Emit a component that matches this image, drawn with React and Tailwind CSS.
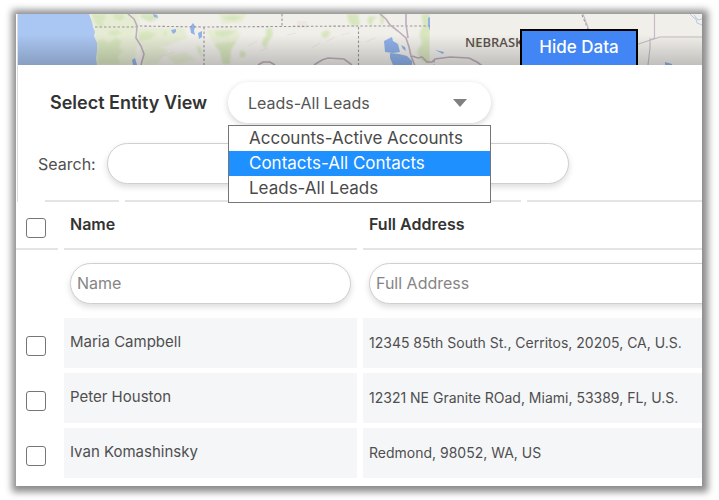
import React, { useState } from 'react';

const VIEWS = ['Accounts-Active Accounts', 'Contacts-All Contacts', 'Leads-All Leads'];

const RECORDS = [
  { id: 1, name: 'Maria Campbell', address: '12345 85th South St., Cerritos, 20205, CA, U.S.' },
  { id: 2, name: 'Peter Houston', address: '12321 NE Granite ROad, Miami, 53389, FL, U.S.' },
  { id: 3, name: 'Ivan Komashinsky', address: 'Redmond, 98052, WA, US' },
];

const PILL = 'h-[41px] rounded-full border border-[#cfcfcf] bg-white shadow-[0_3px_6px_rgba(0,0,0,0.14)] outline-none';
const CHECKBOX = 'block w-5 h-5 appearance-none rounded-[3px] border border-[#767676] bg-white checked:bg-[#1e90ff]';

function MapStrip() {
  return (
    <svg viewBox="18 14 684 51" preserveAspectRatio="xMidYMin slice" className="block w-full h-[51px]" aria-hidden="true">
      <defs>
        <linearGradient id="shade" x1="0" y1="0" x2="0" y2="1">
          <stop offset="0.4" stopColor="#000" stopOpacity="0" />
          <stop offset="1" stopColor="#000" stopOpacity="0.2" />
        </linearGradient>
        <filter id="soft">
          <feGaussianBlur stdDeviation="0.8" />
        </filter>
      </defs>
      <rect x="18" y="14" width="684" height="51" fill="#f1efea" />
      {/* Forests */}
      <g filter="url(#soft)">
        <g fill="#e6ecd4">
          <path d="M90 12h48l2 14-10 10-30-2-8-10zM94 28h38l6 12-4 26H96zM136 28h48l4 10-22 8-26 2zM140 50l16-4 12 4-10 14-14 2zM212 36l30-4-8 14-16 2z" />
          <path d="M205 30l34-1-10 12-16 1zM218 12h30l-6 10-20 2zM166 56l20-4 10 8-20 5z" />
        </g>
        <g fill="#d8e6bf">
          <path d="M92 14h13l1 5-4 3 3 4-6 1-4-5zM113 14h10l2 4-5 3-6-2zM96 42l7-3 5 4 8-5 6 3-3 6 4 4-5 5 2 8H98zM108 31l9-1 5 3-6 3-7-1zM140 14h16l3 4-9 4-9-4zM138 33l8-2 11 3-7 5-11 2zM163 33l3-2 1 4-3 1zM197 45l4 3 2 10-5-7zM214 44l22-3-5 9-1 14h-7l-3-12zM215 31l12-1 9 2-10 5-10-1zM222 17l12-2 8 2-7 4-9-1z" />
          <path d="M266 29l6-1 1 7-5 7-2 6-4-3 1-6 3-3zM321 33l6-3 4 3-5 5-4-1zM347 14h11l2 10-7 3-5-6zM369 16l9 1-5 3-1 6-5-4zM380 14h4v9l-3 2zM240 50l5 2 1 4-6 2z" />
          <path d="M421 14h9v50l-9-3-4-10 5-8-3-9 4-8zM474 42l6-2v7h-6z" />
        </g>
      </g>
      <path d="M430 14h40v20l-2 31h-38z" fill="#f1efea" />
      <path d="M475 41l5-1v7h-5z" fill="#dbe7c6" />
      <path d="M297 21h10v7h-10zM569 30h13v9h-13z" fill="#ece7e0" />
      {/* Water */}
      <path d="M18 14h71l3 8 1 5 2 5-1 4 3 7v8l-1 7 1 7H18z" fill="#aac6f2" />
      <g fill="#8fb2ea">
        <path d="M153 14l4 1 1 3-4-1zM171 30l5-1v3l-3 2zM190 27l3-4 2 3-1 5 1 4-4-2zM198 33l4-2v6l-3 2zM132 60l3-2 2 7h-4z" />
        <path d="M384 41l8-4 1 4 5 3 2 8-7 1-8-1zM390 53l9 1 8 2 5 5v4h-19l-3-7zM401 45l4 2 1 4-3-2zM428 18l2-1v14l-2-6zM435 50l9 2-1 2zM665 62l7 2v1h-7z" />
      </g>
      <path d="M690 14l4 4 2 1 1 4 5 2M694 15l4 5 4-1" fill="none" stroke="#b6c8e2" strokeWidth="1" />
      {/* State borders */}
      <g fill="none" stroke="#9a9498" strokeWidth="1.1" strokeDasharray="2.5 2">
        <path d="M95 27h40l4-1 65 1 154-1h72" />
        <path d="M204 27v38M282 14v12M358.500 27v38M434 60v5M582 15l6 14" />
      </g>
      {/* Highways */}
      <g fill="none" stroke="#bdadbd" strokeWidth="1.600">
        <path d="M128 14l6 5 3 7-1 12 5 8 3 8-3 11" />
        <path d="M380 14l6 5 4 6 8 6 8 7 3 9 2 9 4 10M406 14v10l2 14M412 56l6 2 4-1 5 5 5 0 3-3 15-2 19 1 8 4 8 6" />
        <path d="M258 65l5-3 7 0 5 3M314 65l8-5 6-2 16 1 8 6" />
      </g>
      <g fill="none" stroke="#c6bbc6" strokeWidth="1.200">
        <path d="M583 14l6 16M654.500 14v24l-4 2-15 5M650 38v10l-2 17M651 40l9-3h42" />
      </g>
      <g fill="none" stroke="#e7e4dd" strokeWidth="1">
        <path d="M248 46l9-5M260 51l8-3M287 35l9-2M312 48l8-5M327 41l8-4M341 35l9-2M366 42l9-4M160 57l14-5M178 62l9-6" />
      </g>
      <rect x="18" y="14" width="684" height="51" fill="url(#shade)" />
      <text x="465" y="47" fontSize="13" fill="#5a504e" className="font-['Open_Sans',sans-serif]" fontWeight="600">NEBRASKA</text>
    </svg>
  );
}

function EntitySelect({ value, onChange }) {
  return (
    <div className="relative w-[263px]">
      <select
        id="entity-view"
        value={value}
        onChange={(e) => onChange(e.target.value)}
        className="block w-full h-[41px] appearance-none rounded-full bg-white pl-5 pr-12 text-[16px] text-[#555] shadow-[0_2px_6px_rgba(0,0,0,0.18)] outline-none"
      >
        {VIEWS.map((view) => <option key={view}>{view}</option>)}
      </select>
      <svg viewBox="0 0 14 8" className="absolute right-6 top-[17px] w-[14px] h-2 pointer-events-none" aria-hidden="true">
        <path d="M0 0h14L7 8z" fill="#808080" />
      </svg>
      <ul role="listbox" aria-label="Entity views" className="absolute z-10 left-0 top-[43px] w-full border border-[#767676] bg-white pb-px">
        {VIEWS.map((view) => (
          <li
            key={view}
            role="option"
            aria-selected={view === value}
            onClick={() => onChange(view)}
            className={`h-[25px] pl-5 text-[17px] leading-[24px] cursor-default ${
              view === 'Contacts-All Contacts' ? 'bg-[#1e90ff] text-white' : 'text-[#4a4a4a]'
            }`}
          >
            {view}
          </li>
        ))}
      </ul>
    </div>
  );
}

export default function App() {
  const [view, setView] = useState('Leads-All Leads');
  const [selected, setSelected] = useState([]);

  const toggle = (id) => {
    setSelected((prev) => (prev.includes(id) ? prev.filter((x) => x !== id) : [...prev, id]));
  };

  const toggleAll = () => {
    setSelected(selected.length === RECORDS.length ? [] : RECORDS.map((r) => r.id));
  };

  return (
    <div className="bg-white pt-[14px] pb-[14px] pl-4 pr-[17px] font-[Inter,'Liberation_Sans',sans-serif] text-[#4f4f4f]">
      <div className="shadow-[1px_1px_7px_5px_#8c8c8c]">
        <main className="overflow-hidden bg-white pb-[3px]">
          <div className="ml-px border-l border-[#dedede]">
            {/* Map with toggle */}
            <div className="relative">
              <MapStrip />
              <button type="button" className="absolute right-16 bottom-0 w-[118px] h-9 border-2 border-b-0 border-black bg-[#4285f4] text-[17px] font-medium text-white">
                Hide Data
              </button>
            </div>

            {/* View selection and search */}
            <div className="flex items-center pt-[17px] pl-8">
              <label htmlFor="entity-view" className="w-[178px] shrink-0 whitespace-nowrap text-[18px] font-semibold text-[#333]">Select Entity View</label>
              <EntitySelect value={view} onChange={setView} />
            </div>
            <div className="flex items-center mt-5 pl-5">
              <label htmlFor="search" className="w-[69px] shrink-0 text-[16px]">Search:</label>
              <input id="search" type="text" className={`${PILL} w-[462px] px-5`} />
            </div>
            <div className="flex gap-1.5 mt-4 pl-[27px]">
              <div className="h-0.5 w-[74px] bg-[#e4e4e4]" />
              <div className="h-0.5 w-[396px] bg-[#e4e4e4]" />
              <div className="h-0.5 flex-1 bg-[#e4e4e4]" />
            </div>
          </div>

          {/* Records */}
          <table className="-ml-1.5 -mt-1 w-[calc(100%+48px)] table-fixed border-separate border-spacing-x-1.5 border-spacing-y-[5px] text-left text-[14px]">
            <colgroup>
              <col className="w-[42px]" />
              <col className="w-[293px]" />
              <col />
            </colgroup>
            <thead>
              <tr className="h-[47px]">
                <th className="border-b-2 border-[#e4e4e4] pl-2.5 pt-1">
                  <input type="checkbox" aria-label="Select all" checked={selected.length === RECORDS.length} onChange={toggleAll} className={CHECKBOX} />
                </th>
                <th className="border-b-2 border-[#e4e4e4] pl-1.5 pb-1 text-[16px] font-semibold text-[#333]">Name</th>
                <th className="border-b-2 border-[#e4e4e4] pl-1.5 pb-1 text-[16px] font-semibold text-[#333]">Full Address</th>
              </tr>
              <tr className="h-[58px]">
                <td />
                <td className="px-1.5 pb-0.5">
                  <input type="text" placeholder="Name" aria-label="Filter by name" className={`${PILL} block w-full px-1.5 text-[16px] placeholder:text-[#858585]`} />
                </td>
                <td className="px-1.5 pb-0.5">
                  <input type="text" placeholder="Full Address" aria-label="Filter by full address" className={`${PILL} block w-full px-1.5 text-[16px] placeholder:text-[#858585]`} />
                </td>
              </tr>
            </thead>
            <tbody>
              {RECORDS.map((record) => (
                <tr key={record.id} className="h-[50px]">
                  <td className="pl-2.5 pt-1.5">
                    <input type="checkbox" aria-label={`Select ${record.name}`} checked={selected.includes(record.id)} onChange={() => toggle(record.id)} className={CHECKBOX} />
                  </td>
                  <td className="bg-[#f5f6f8] px-1.5 pb-0.5 text-[15px]">{record.name}</td>
                  <td className="bg-[#f5f6f8] px-1.5 pb-0.5 whitespace-nowrap">{record.address}</td>
                </tr>
              ))}
            </tbody>
          </table>
        </main>
      </div>
    </div>
  );
}
